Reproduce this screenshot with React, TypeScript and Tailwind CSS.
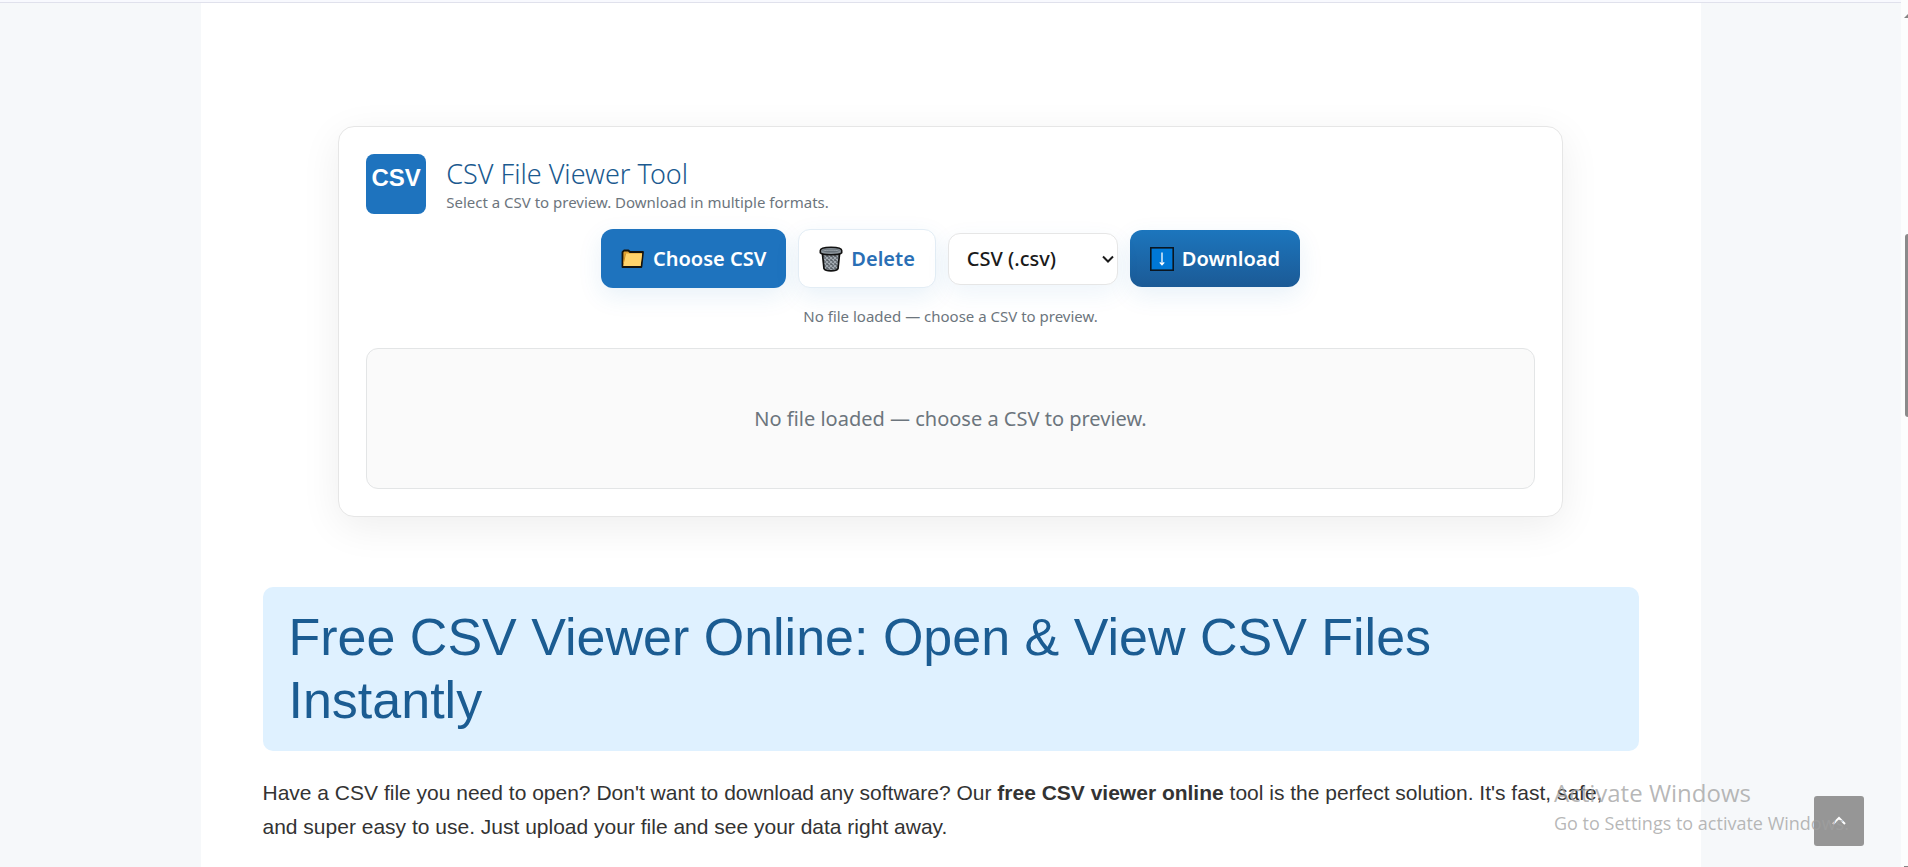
import type { ReactNode } from "react";

function FolderIcon() {
  return (
    <svg width="24" height="20" viewBox="0 0 24 20" aria-hidden="true">
      <path d="M1.5 18V3.2L3 1.5h4.4L9 3h13l-1.6 15z" fill="#e0a030" stroke="#16130c" strokeWidth="1.8" strokeLinejoin="round" />
      <path d="M4.2 4.4h17L19.6 17H2.4z" fill="#ffd36b" />
      <path d="M4.6 4.4 2.4 14" fill="none" stroke="#c98a22" strokeWidth="1" />
    </svg>
  );
}

function TrashIcon() {
  return (
    <svg width="24" height="26" viewBox="0 0 24 26" aria-hidden="true">
      <defs>
        <pattern id="mesh" width="4" height="4" patternUnits="userSpaceOnUse">
          <rect width="4" height="4" fill="#596067" />
          <path d="M0 0l4 4M4 0L0 4" stroke="#a3abb2" strokeWidth="1.1" />
        </pattern>
      </defs>
      <path d="M3.4 7.5 5 22.6c.8 1.6 4 2.3 7 2.3s6.2-.7 7-2.3L20.6 7.5z" fill="url(#mesh)" stroke="#111" strokeWidth="1.7" strokeLinejoin="round" />
      <path d="M1.3 4.6C1.3 2.6 6 1.3 12 1.3s10.7 1.3 10.7 3.3v2.2c-1 1.4-5.5 2-10.7 2s-9.7-.6-10.7-2z" fill="#8c959c" stroke="#111" strokeWidth="1.6" strokeLinejoin="round" />
      <ellipse cx="12" cy="4.6" rx="8.8" ry="1.9" fill="#68727a" />
      <path d="M4.5 4.8c2-.8 13-.8 15 0" stroke="#a9b1b8" strokeWidth=".8" fill="none" />
    </svg>
  );
}

function DownIcon() {
  return (
    <svg width="24" height="24" viewBox="0 0 24 24" aria-hidden="true">
      <rect x=".8" y=".8" width="22.4" height="22.4" fill="#0078d7" stroke="#0b1620" strokeWidth="1.6" />
      <path d="M12 5.5v12M9.8 15.4l2.2 2.4 2.2-2.4" fill="none" stroke="#fff" strokeWidth="1.3" />
    </svg>
  );
}

const toolButton =
  "flex items-center gap-2 rounded-xl px-5 text-xl font-semibold shadow-[0_8px_24px_rgba(30,115,190,0.10)]";

function Note({ children }: { children: ReactNode }) {
  return <p className="mt-4 text-center text-[15px] leading-6 text-[#6c757d]">{children}</p>;
}

function ViewerCard() {
  return (
    <section className="mx-auto w-[89%] rounded-2xl border border-[#e6e6e6] bg-white p-[27px] font-['Noto_Sans','Open_Sans',sans-serif] shadow-[0_10px_40px_rgba(0,0,0,0.07)]">
      <header className="flex gap-5">
        <div className="h-[60px] w-[60px] shrink-0 rounded-lg bg-[#1e73be] pt-2 text-center font-['Liberation_Sans',Arial,sans-serif] text-2xl leading-8 font-bold text-white">
          CSV
        </div>
        <div className="pt-1">
          <h2 className="text-[27px] leading-8 font-light text-[#1b5a8f]">CSV File Viewer Tool</h2>
          <p className="text-[15px] leading-6 text-[#6c757d]">Select a CSV to preview. Download in multiple formats.</p>
        </div>
      </header>
      <div className="mt-[15px] flex flex-wrap items-center justify-center gap-3">
        <button type="button" className={`${toolButton} h-[59px] bg-[#1e73be] text-white`}>
          <FolderIcon />
          Choose CSV
        </button>
        <button type="button" className={`${toolButton} h-[59px] border border-[#e3edf5] bg-white text-[#2a6fb5]`}>
          <TrashIcon />
          Delete
        </button>
        <div className="relative">
          <select
            aria-label="Download format"
            className="h-[52px] w-[170px] appearance-none rounded-xl border border-[#e6e6e6] bg-white pl-[18px] text-xl font-medium text-[#1a1a1a] shadow-[0_8px_24px_rgba(30,115,190,0.08)]"
          >
            <option>CSV (.csv)</option>
            <option>Excel (.xlsx)</option>
            <option>JSON (.json)</option>
            <option>Text (.txt)</option>
          </select>
          <svg className="pointer-events-none absolute top-5 right-1" width="12" height="12" viewBox="0 0 12 12" aria-hidden="true">
            <path d="M1 3.5l5 5 5-5" fill="none" stroke="#1a1a1a" strokeWidth="2" />
          </svg>
        </div>
        <button type="button" className={`${toolButton} h-[57px] bg-linear-to-b from-[#1c76bd] to-[#1b5a96] text-white`}>
          <DownIcon />
          Download
        </button>
      </div>
      <Note>No file loaded — choose a CSV to preview.</Note>
      <div className="mt-5 flex h-[141px] items-center justify-center rounded-xl border border-[#e3e5e6] bg-[#fafafa] text-xl text-[#6c757d]">
        No file loaded — choose a CSV to preview.
      </div>
    </section>
  );
}

export default function App() {
  return (
    <div className="flex h-screen overflow-hidden bg-[#fcfdfd] font-['Liberation_Sans',Arial,sans-serif]">
      <div className="relative flex min-w-0 flex-1 flex-col bg-[#f6f8fa]">
        <div className="h-[3px] shrink-0 border-b border-[#e0e1ec] bg-[#f8f9fe]" />
        <main className="mx-auto w-full max-w-[1500px] flex-1 bg-white px-[62px] pt-[123px]">
          <ViewerCard />
          <h1 className="mt-[70px] rounded-[10px] bg-[#dff1ff] px-[26px] py-[19px] text-[52px] leading-[63px] text-[#1b5c92]">
            Free CSV Viewer Online: Open &amp; View CSV Files Instantly
          </h1>
          <p className="mt-[25px] text-[21px] leading-[34px] text-[#333333]">
            Have a CSV file you need to open? Don't want to download any software? Our{" "}
            <strong>free CSV viewer online</strong> tool is the perfect solution. It's fast, safe, and super easy to use. Just
            upload your file and see your data right away.
          </p>
        </main>
        <button
          type="button"
          aria-label="Scroll to top"
          className="absolute right-[37px] bottom-[21px] flex h-[50px] w-[50px] items-center justify-center rounded-[3px] bg-[#969696]"
        >
          <svg width="14" height="14" viewBox="0 0 14 14" aria-hidden="true">
            <path d="M1 10l6-6 6 6" fill="none" stroke="#fff" strokeWidth="2" />
          </svg>
        </button>
        <div className="pointer-events-none absolute right-[61px] bottom-[30px] w-[286px] font-['Open_Sans','Noto_Sans',sans-serif] whitespace-nowrap text-[#a0a0a0]/75">
          <p className="text-2xl leading-8">Activate Windows</p>
          <p className="text-lg leading-7">Go to Settings to activate Windows.</p>
        </div>
      </div>
      <div className="flex w-[7px] flex-col items-end justify-between overflow-hidden" aria-hidden="true">
        <svg className="mt-3.5" width="4" height="4" viewBox="0 0 4 4">
          <path d="M0 4L4 0v4z" fill="#858585" />
        </svg>
        <div className="mt-[216px] mb-auto h-[183px] w-[3px] rounded-l-sm bg-[#8b8b8b]" />
        <div className="h-px w-1 bg-[#858585]" />
      </div>
    </div>
  );
}
